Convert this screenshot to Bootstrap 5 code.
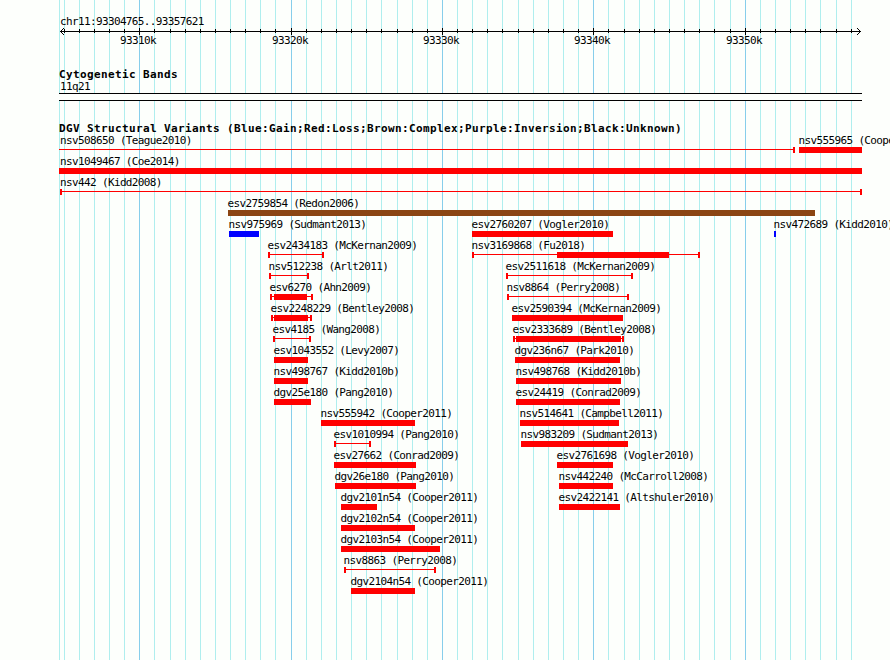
<!DOCTYPE html>
<html lang="en">
<head>
    <meta charset="UTF-8">
    <meta name="viewport" content="width=device-width, initial-scale=1.0">
    <title>chr11:93304765..93357621</title>
    <link href="https://cdn.jsdelivr.net/npm/bootstrap@5.3.0/dist/css/bootstrap.min.css" rel="stylesheet">
    <style>
        body {
            background-color: #fdfffc;
            color: #000;
            font-family: "DejaVu Sans Mono", "Liberation Mono", monospace;
        }
        .browser {
            width: 890px;
            height: 660px;
        }
        .txt {
            font-size: 11px;
            line-height: 12px;
            height: 12px;
            letter-spacing: -0.635px;
            white-space: pre;
        }
        .track-title {
            font-size: 11px;
            font-weight: bold;
            line-height: 12px;
            height: 12px;
            letter-spacing: 0.378px;
            margin-left: 59px;
            white-space: pre;
        }
        .region {
            margin: 16px 0 0 60px;
        }
        .ruler {
            height: 8px;
        }
        .ruler-labels {
            height: 12px;
            margin-top: -1px;
        }
        .cyto {
            margin-top: 22px;
        }
        .band-name {
            margin-left: 60px;
        }
        .band {
            width: 803px;
            height: 8px;
            margin-left: 59px;
            border-top: 1px solid #000;
            border-bottom: 1px solid #000;
            background-color: #fdfffc;
        }
        .variants {
            margin-top: 22px;
        }
        .lane {
            height: 21px;
        }
        /* everything in a lane shares one cell and is shifted by its start */
        .lane > *, .ruler-labels > *, .glyph > * {
            grid-area: 1 / 1;
        }
        .glyph {
            height: 6px;
        }
        .span-line {
            height: 1px;
            margin-top: 2px;
            background-color: currentColor;
        }
        .end-left, .end-right {
            width: 2px;
            height: 6px;
            background-color: currentColor;
        }
        .end-right {
            justify-self: end;
        }
        .thick {
            height: 6px;
            background-color: currentColor;
        }
        .loss { color: #ff0000; }
        .gain { color: #0000ff; }
        .complex { color: #8b4513; }
    </style>
</head>
<body>
    <div class="browser position-relative overflow-hidden">
        <svg id="grid" class="position-absolute top-0 start-0" width="890" height="660" shape-rendering="crispEdges"></svg>
        <div class="position-relative d-flex flex-column">
            <div class="txt region">chr11:93304765..93357621</div>
            <svg id="ruler" class="ruler d-block" width="890" height="8" shape-rendering="crispEdges"></svg>
            <div id="rulerLabels" class="ruler-labels d-grid"></div>

            <section class="cyto">
                <div class="track-title">Cytogenetic Bands</div>
                <div class="txt band-name">11q21</div>
                <div class="band"></div>
            </section>

            <section class="variants">
                <div class="track-title">DGV Structural Variants (Blue:Gain;Red:Loss;Brown:Complex;Purple:Inversion;Black:Unknown)</div>
                <div id="lanes"></div>
            </section>
        </div>
    </div>

    <script src="https://cdn.jsdelivr.net/npm/bootstrap@5.3.0/dist/js/bootstrap.bundle.min.js"></script>
    <script>
        const minor = [64, 79, 94, 109, 124, 154, 170, 185, 200, 215, 230, 245, 260, 275,
            306, 321, 336, 351, 366, 381, 397, 412, 427, 457, 472, 487, 502, 518, 533, 548,
            563, 578, 608, 624, 639, 654, 669, 684, 699, 714, 730, 760, 775, 790, 805, 820, 836, 851];
        const major = { 139: '93310k', 291: '93320k', 442: '93330k', 593: '93340k', 745: '93350k' };

        // [label, start, end, thick start, thick end, type]; no thick part = line only
        const lanes = [
            [['nsv508650 (Teague2010)', 59, 795], ['nsv555965 (Cooper2011)', 799, 862, 799, 862]],
            [['nsv1049467 (Coe2014)', 59, 862, 59, 862]],
            [['nsv442 (Kidd2008)', 60, 862]],
            [['esv2759854 (Redon2006)', 228, 815, 228, 815, 'complex']],
            [['nsv975969 (Sudmant2013)', 229, 259, 229, 259, 'gain'], ['esv2760207 (Vogler2010)', 472, 613, 472, 613], ['nsv472689 (Kidd2010)', 774, 776, 774, 776, 'gain']],
            [['esv2434183 (McKernan2009)', 268, 324], ['nsv3169868 (Fu2018)', 472, 700, 557, 669]],
            [['nsv512238 (Arlt2011)', 269, 309], ['esv2511618 (McKernan2009)', 506, 633]],
            [['esv6270 (Ahn2009)', 270, 313, 274, 307], ['nsv8864 (Perry2008)', 507, 629]],
            [['esv2248229 (Bentley2008)', 271, 312, 274, 308], ['esv2590394 (McKernan2009)', 512, 623, 512, 623]],
            [['esv4185 (Wang2008)', 273, 311], ['esv2333689 (Bentley2008)', 513, 624, 516, 621]],
            [['esv1043552 (Levy2007)', 274, 308, 274, 308], ['dgv236n67 (Park2010)', 515, 620, 515, 620]],
            [['nsv498767 (Kidd2010b)', 274, 308, 274, 308], ['nsv498768 (Kidd2010b)', 516, 621, 516, 621]],
            [['dgv25e180 (Pang2010)', 274, 311, 274, 311], ['esv24419 (Conrad2009)', 516, 620, 516, 620]],
            [['nsv555942 (Cooper2011)', 321, 415, 321, 415], ['nsv514641 (Campbell2011)', 520, 619, 520, 619]],
            [['esv1010994 (Pang2010)', 334, 371], ['nsv983209 (Sudmant2013)', 521, 628, 521, 628]],
            [['esv27662 (Conrad2009)', 334, 416, 334, 416], ['esv2761698 (Vogler2010)', 557, 613, 557, 613]],
            [['dgv26e180 (Pang2010)', 335, 416, 335, 416], ['nsv442240 (McCarroll2008)', 559, 613, 559, 613]],
            [['dgv2101n54 (Cooper2011)', 341, 377, 341, 377], ['esv2422141 (Altshuler2010)', 559, 620, 559, 620]],
            [['dgv2102n54 (Cooper2011)', 341, 415, 341, 415]],
            [['dgv2103n54 (Cooper2011)', 341, 440, 341, 440]],
            [['nsv8863 (Perry2008)', 344, 436]],
            [['dgv2104n54 (Cooper2011)', 351, 415, 351, 415]]
        ];

        const majorX = Object.keys(major).map(Number);
        const rect = (x, y, w, h, fill) => `<rect x="${x}" y="${y}" width="${w}" height="${h}" fill="${fill}"/>`;

        document.getElementById('grid').innerHTML =
            [59, ...minor].map(x => rect(x, 0, 1, 660, '#afeeee')).join('') +
            majorX.map(x => rect(x, 0, 1, 660, '#87ceeb')).join('');

        document.getElementById('ruler').innerHTML =
            rect(60, 3, 801, 1, '#000') +
            minor.map(x => rect(x, 1, 1, 4, '#000')).join('') +
            majorX.map(x => rect(x, 0, 1, 7, '#000')).join('') +
            [1, 2, 3].map(i => rect(60 + i, 3 - i, 1, 1, '#000') + rect(60 + i, 3 + i, 1, 1, '#000') +
                rect(860 - i, 3 - i, 1, 1, '#000') + rect(860 - i, 3 + i, 1, 1, '#000')).join('');

        document.getElementById('rulerLabels').innerHTML =
            majorX.map(x => `<div class="txt" style="margin-left:${x - 19}px">${major[x]}</div>`).join('');

        function drawFeature([label, start, end, thickStart, thickEnd, type = 'loss']) {
            const solid = thickStart === start && thickEnd === end;
            let parts = '';
            if (!solid) {
                parts += '<div class="span-line"></div>';
                if (start > 59) parts += '<div class="end-left"></div>';
                parts += '<div class="end-right"></div>';
            }
            if (thickStart) {
                parts += `<div class="thick" style="margin-left:${thickStart - start}px;width:${thickEnd - thickStart}px"></div>`;
            }
            const labelShift = Math.max(start - 0.5, 60) - start;
            return `<div style="margin-left:${start}px;width:${end - start}px">
                <div class="txt" style="margin-left:${labelShift}px">${label}</div>
                <div class="glyph d-grid ${type}">${parts}</div>
            </div>`;
        }

        document.getElementById('lanes').innerHTML =
            lanes.map(lane => `<div class="lane d-grid">${lane.map(drawFeature).join('')}</div>`).join('');
    </script>
</body>
</html>
